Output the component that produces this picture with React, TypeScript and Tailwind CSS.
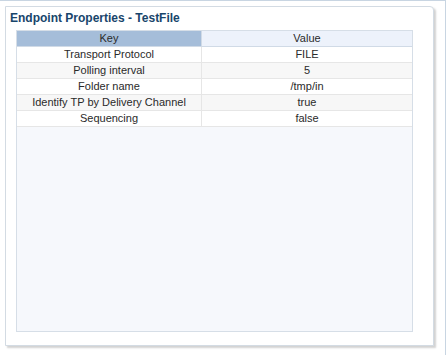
import React from 'react';

const rows = [
  { key: 'Transport Protocol', value: 'FILE' },
  { key: 'Polling interval', value: '5' },
  { key: 'Folder name', value: '/tmp/in' },
  { key: 'Identify TP by Delivery Channel', value: 'true' },
  { key: 'Sequencing', value: 'false' },
];

export default function App() {
  return (
    <div
      className="w-[446px] h-[355px] bg-white border-t border-r border-[#c8d5e2] overflow-hidden"
      style={{ fontFamily: '"Liberation Sans", Arial, sans-serif' }}
    >
      <div className="ml-[5px] mt-[5px] w-[429px] h-[340px] bg-white border border-[#d3dbe3] rounded-tr-[4px] shadow-[2px_2px_2px_rgba(0,0,0,0.18)] flex flex-col">
        {/* Title */}
        <div className="h-[23px] pl-[4px] pt-[3px] text-[12px] font-bold text-[#18456b] leading-[16px]">
          Endpoint Properties - TestFile
        </div>

        {/* Table */}
        <div className="ml-[10px] w-[397px] h-[302px] border border-[#d6dee7] bg-[#f6f8fc] flex flex-col text-[11px] text-[#2a2a2a]">
          <div className="flex h-[16px] border-b border-[#d0dae6] leading-[15px]">
            <div className="w-[184px] bg-[#a5bdd9] text-center">Key</div>
            <div className="w-px bg-[#d0dae6]" />
            <div className="flex-1 bg-[#edf2fb] text-center">Value</div>
          </div>
          {rows.map((r, i) => (
            <div
              key={r.key}
              className={
                'flex h-[16px] border-b border-[#e6e6e6] leading-[15px] ' +
                (i % 2 === 1 ? 'bg-[#f7f7f7]' : 'bg-white')
              }
            >
              <div className="w-[184px] text-center">{r.key}</div>
              <div className="w-px bg-[#e6e6e6]" />
              <div className="flex-1 text-center">{r.value}</div>
            </div>
          ))}
        </div>
      </div>
    </div>
  );
}
